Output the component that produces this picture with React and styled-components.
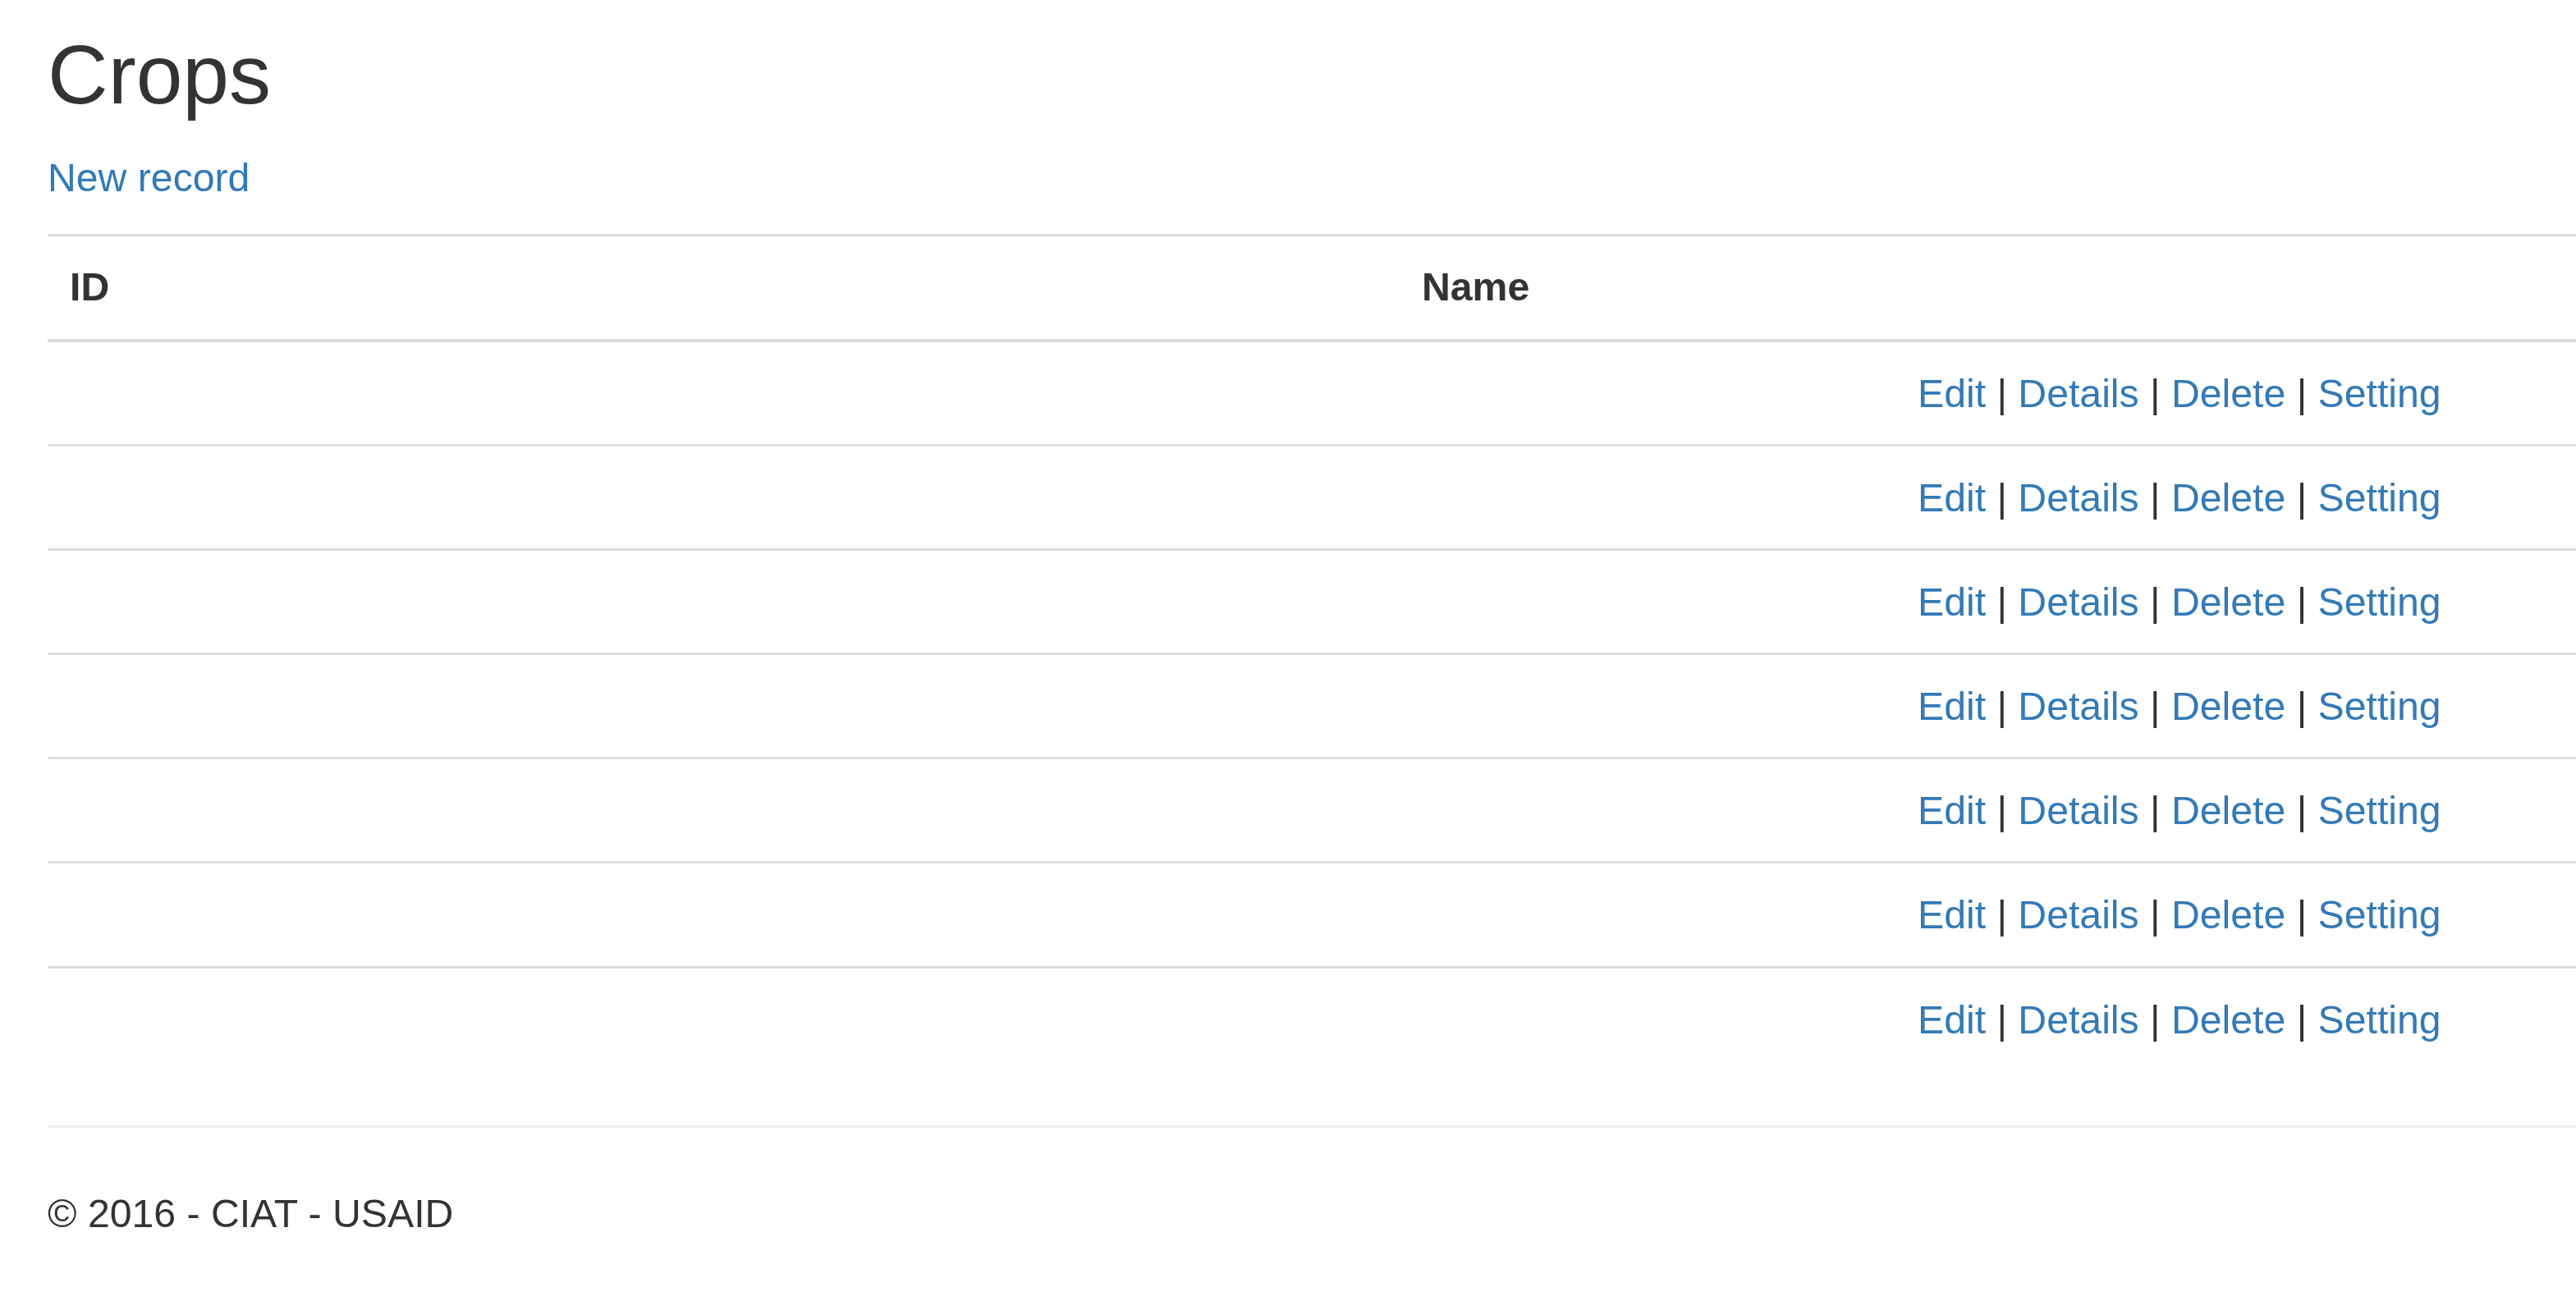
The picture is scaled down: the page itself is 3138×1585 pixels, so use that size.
import React from 'react';
import styled, { createGlobalStyle } from 'styled-components';

const GlobalStyle = createGlobalStyle`
  html, body {
    margin: 0;
    padding: 0;
    background: #fff;
  }

  body {
    font-family: "Liberation Sans", Arial, Helvetica, sans-serif;
    font-size: 48.2px;
    line-height: 68px;
    color: #333;
    overflow: hidden;
  }
`;

const Page = styled.div`
  padding: 35px 0 0 58px;
`;

const Title = styled.h2`
  margin: 0 0 35px;
  font-size: 102px;
  line-height: 112px;
  font-weight: 500;
  color: #333;
`;

const Link = styled.a`
  color: #337ab7;
  text-decoration: none;
  cursor: pointer;
`;

const Actions = styled.p`
  margin: 0 0 35px;
`;

const Table = styled.table`
  width: 100%;
  table-layout: fixed;
  border-collapse: collapse;
  border-spacing: 0;
  margin-bottom: 67px;
`;

const HeadCell = styled.th`
  text-align: left;
  font-weight: 700;
  vertical-align: bottom;
  padding: 27px 27px 29.5px;
  border-top: 3px solid #ddd;
  border-bottom: 4px solid #ddd;
`;

const Cell = styled.td`
  padding: 28px 27px 28.2px;
  border-top: 3px solid #ddd;
  vertical-align: top;
  white-space: nowrap;
`;

const Sep = styled.span`
  color: #333;
`;

const Rule = styled.hr`
  margin: 0 0 70px;
  border: 0;
  border-top: 3px solid #eee;
  height: 0;
`;

const Footer = styled.footer`
  p {
    margin: 0;
  }
`;

const rows = Array.from({ length: 7 }, (_, i) => ({ id: i + 1 }));

const RowActions = () => (
  <>
    <Link>Edit</Link> <Sep>|</Sep> <Link>Details</Link> <Sep>|</Sep>{' '}
    <Link>Delete</Link> <Sep>|</Sep> <Link>Setting</Link>
  </>
);

const App = () => {
  return (
    <>
      <GlobalStyle />
      <Page>
        <Title>Crops</Title>
        <Actions>
          <Link>New record</Link>
        </Actions>
        <Table>
          <colgroup>
            <col style={{ width: 1647 }} />
            <col style={{ width: 604 }} />
            <col />
          </colgroup>
          <thead>
            <tr>
              <HeadCell>ID</HeadCell>
              <HeadCell>Name</HeadCell>
              <HeadCell />
            </tr>
          </thead>
          <tbody>
            {rows.map((row) => (
              <tr key={row.id}>
                <Cell />
                <Cell />
                <Cell>
                  <RowActions />
                </Cell>
              </tr>
            ))}
          </tbody>
        </Table>
        <Rule />
        <Footer>
          <p>&copy; 2016 - CIAT - USAID</p>
        </Footer>
      </Page>
    </>
  );
};

export default App;
